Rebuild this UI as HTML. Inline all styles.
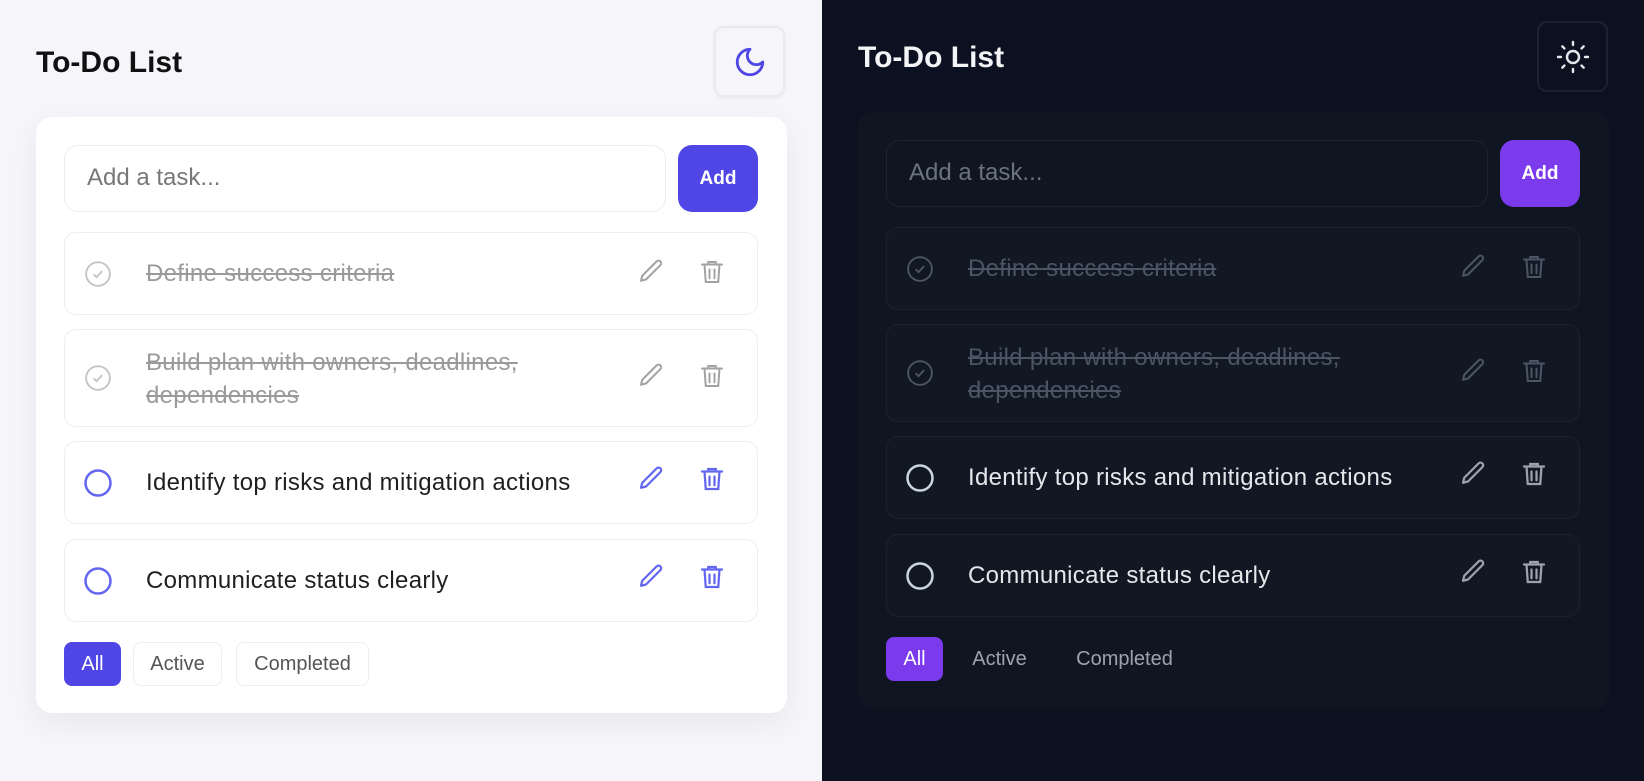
<!DOCTYPE html>
<html><head><meta charset="utf-8"><style>
*{box-sizing:border-box;margin:0;padding:0}
body{width:1644px;height:781px;overflow:hidden;font-family:"Liberation Sans",sans-serif;position:relative}
.panel{position:absolute;top:0;width:822px;height:781px}
.light{left:0;background:#f5f5fa}
.dark{left:822px;background:#0b1120}
.title{position:absolute;left:36px;font-size:30px;font-weight:bold}
.light .title{top:46px;color:#111}
.dark .title{top:41px;color:#f3f4f6}
.tog{position:absolute;width:71px;height:71px;border-radius:10px;display:flex;align-items:center;justify-content:center}
.light .tog{left:714px;top:26px;border:2px solid #e9e9f0;background:#f5f5fa;box-shadow:0 1px 3px rgba(0,0,0,.06)}
.dark .tog{left:715px;top:21px;border:2px solid #1a2230;background:#0b1120}
.card{position:absolute;left:36px;width:751px;border-radius:16px}
.light .card{top:117px;height:596px;background:#fff;box-shadow:0 10px 30px rgba(0,0,0,.06)}
.dark .card{top:112px;height:597px;background:#0f1621}
.inp{position:absolute;left:28px;top:28px;width:602px;height:67px;border-radius:14px;font-size:24px;padding-left:22px;line-height:64px}
.light .inp{border:1.5px solid #ececf2;color:#777}
.dark .inp{border:1.5px solid #1c2431;color:#6b7280;background:#0f1621}
.add{position:absolute;left:642px;top:28px;width:80px;height:67px;border-radius:14px;color:#fff;font-size:19px;font-weight:bold;display:flex;align-items:center;justify-content:center}
.light .add{background:#4f46e5}
.dark .add{background:#7c3aed}
.item{position:absolute;left:28px;width:694px;border-radius:12px}
.light .item{border:1.5px solid #ededf3;background:#fff}
.dark .item{border:1.5px solid #1a2230;background:#111824}
.item .txt{position:absolute;left:81px;font-size:24px;letter-spacing:0.3px;line-height:33px;width:470px}
.item svg{position:absolute}
.item .ck{left:18px}
.item .ed{left:571px}
.item .tr{left:632px}
.done .txt{text-decoration:line-through}
.light .done .txt{color:#9a9a9a}
.dark .done .txt{color:#4b5563}
.light .act .txt{color:#1f1f1f}
.dark .act .txt{color:#e5e7eb}
.filt{position:absolute;top:525px;height:44px;border-radius:8px;font-size:20px;display:flex;align-items:center;justify-content:center}
.light .filt{border:1.5px solid #ededf3;color:#555}
.dark .filt{color:#9ca3af}
.light .filt.on{background:#4f46e5;color:#fff;border-color:#4f46e5}
.dark .filt.on{background:#7c3aed;color:#fff}
</style></head><body>

<div class="panel light">
<div class="title">To-Do List</div>
<div class="tog"><svg width="34" height="34" viewBox="0 0 24 24" fill="none" stroke="#4f46e5" stroke-width="2" stroke-linecap="round" stroke-linejoin="round"><path d="M12 3a6 6 0 0 0 9 9 9 9 0 1 1-9-9Z"/></svg></div>
<div class="card">
<div class="inp">Add a task...</div>
<div class="add">Add</div>

<div class="item done" style="top:115px;height:83px">
<svg class="ck" style="top:26px" width="30" height="30" viewBox="0 0 24 24" fill="none" stroke="#c4c4c4" stroke-width="1.5"><circle cx="12" cy="12" r="9.5"/><path d="M8.5 12.2l2.3 2.3 4.5-4.8"/></svg>
<div class="txt" style="top:24px">Define success criteria</div>
<svg class="ed" style="top:24px" width="30" height="30" viewBox="0 0 24 24" fill="none" stroke="#a3a3a3" stroke-width="1.6" stroke-linejoin="round"><path d="M16.5 3.5a2.1 2.1 0 0 1 3 3L8 18l-4 1 1-4Z"/></svg>
<svg class="tr" style="top:24px" width="30" height="30" viewBox="0 0 24 24" fill="none" stroke="#a3a3a3" stroke-width="1.6" stroke-linecap="round"><path d="M4 6h16M9 6V4h6v2M6 6l1 14h10l1-14M10 10v7M14 10v7"/></svg>
</div>

<div class="item done" style="top:212px;height:98px">
<svg class="ck" style="top:33px" width="30" height="30" viewBox="0 0 24 24" fill="none" stroke="#c4c4c4" stroke-width="1.5"><circle cx="12" cy="12" r="9.5"/><path d="M8.5 12.2l2.3 2.3 4.5-4.8"/></svg>
<div class="txt" style="top:16px">Build plan with owners, deadlines, dependencies</div>
<svg class="ed" style="top:31px" width="30" height="30" viewBox="0 0 24 24" fill="none" stroke="#a3a3a3" stroke-width="1.6" stroke-linejoin="round"><path d="M16.5 3.5a2.1 2.1 0 0 1 3 3L8 18l-4 1 1-4Z"/></svg>
<svg class="tr" style="top:31px" width="30" height="30" viewBox="0 0 24 24" fill="none" stroke="#a3a3a3" stroke-width="1.6" stroke-linecap="round"><path d="M4 6h16M9 6V4h6v2M6 6l1 14h10l1-14M10 10v7M14 10v7"/></svg>
</div>

<div class="item act" style="top:324px;height:83px">
<svg class="ck" style="top:26px" width="30" height="30" viewBox="0 0 24 24" fill="none" stroke="#6366f1" stroke-width="2"><circle cx="12" cy="12" r="10"/></svg>
<div class="txt" style="top:24px">Identify top risks and mitigation actions</div>
<svg class="ed" style="top:22px" width="30" height="30" viewBox="0 0 24 24" fill="none" stroke="#6366f1" stroke-width="1.8" stroke-linejoin="round"><path d="M16.5 3.5a2.1 2.1 0 0 1 3 3L8 18l-4 1 1-4Z"/></svg>
<svg class="tr" style="top:22px" width="30" height="30" viewBox="0 0 24 24" fill="none" stroke="#6366f1" stroke-width="1.8" stroke-linecap="round"><path d="M4 6h16M9 6V4h6v2M6 6l1 14h10l1-14M10 10v7M14 10v7"/></svg>
</div>

<div class="item act" style="top:422px;height:83px">
<svg class="ck" style="top:26px" width="30" height="30" viewBox="0 0 24 24" fill="none" stroke="#6366f1" stroke-width="2"><circle cx="12" cy="12" r="10"/></svg>
<div class="txt" style="top:24px">Communicate status clearly</div>
<svg class="ed" style="top:22px" width="30" height="30" viewBox="0 0 24 24" fill="none" stroke="#6366f1" stroke-width="1.8" stroke-linejoin="round"><path d="M16.5 3.5a2.1 2.1 0 0 1 3 3L8 18l-4 1 1-4Z"/></svg>
<svg class="tr" style="top:22px" width="30" height="30" viewBox="0 0 24 24" fill="none" stroke="#6366f1" stroke-width="1.8" stroke-linecap="round"><path d="M4 6h16M9 6V4h6v2M6 6l1 14h10l1-14M10 10v7M14 10v7"/></svg>
</div>

<div class="filt on" style="left:28px;width:57px">All</div>
<div class="filt" style="left:97px;width:89px">Active</div>
<div class="filt" style="left:200px;width:133px">Completed</div>
</div>
</div>

<div class="panel dark">
<div class="title">To-Do List</div>
<div class="tog"><svg width="36" height="36" viewBox="0 0 24 24" fill="none" stroke="#e5e7eb" stroke-width="1.6" stroke-linecap="round"><circle cx="12" cy="12" r="4"/><path d="M12 2v2M12 20v2M4.9 4.9l1.4 1.4M17.7 17.7l1.4 1.4M2 12h2M20 12h2M4.9 19.1l1.4-1.4M17.7 6.3l1.4-1.4"/></svg></div>
<div class="card">
<div class="inp">Add a task...</div>
<div class="add">Add</div>

<div class="item done" style="top:115px;height:83px">
<svg class="ck" style="top:26px" width="30" height="30" viewBox="0 0 24 24" fill="none" stroke="#4b5563" stroke-width="1.5"><circle cx="12" cy="12" r="9.5"/><path d="M8.5 12.2l2.3 2.3 4.5-4.8"/></svg>
<div class="txt" style="top:24px">Define success criteria</div>
<svg class="ed" style="top:24px" width="30" height="30" viewBox="0 0 24 24" fill="none" stroke="#4b5563" stroke-width="1.6" stroke-linejoin="round"><path d="M16.5 3.5a2.1 2.1 0 0 1 3 3L8 18l-4 1 1-4Z"/></svg>
<svg class="tr" style="top:24px" width="30" height="30" viewBox="0 0 24 24" fill="none" stroke="#4b5563" stroke-width="1.6" stroke-linecap="round"><path d="M4 6h16M9 6V4h6v2M6 6l1 14h10l1-14M10 10v7M14 10v7"/></svg>
</div>

<div class="item done" style="top:212px;height:98px">
<svg class="ck" style="top:33px" width="30" height="30" viewBox="0 0 24 24" fill="none" stroke="#4b5563" stroke-width="1.5"><circle cx="12" cy="12" r="9.5"/><path d="M8.5 12.2l2.3 2.3 4.5-4.8"/></svg>
<div class="txt" style="top:16px">Build plan with owners, deadlines, dependencies</div>
<svg class="ed" style="top:31px" width="30" height="30" viewBox="0 0 24 24" fill="none" stroke="#4b5563" stroke-width="1.6" stroke-linejoin="round"><path d="M16.5 3.5a2.1 2.1 0 0 1 3 3L8 18l-4 1 1-4Z"/></svg>
<svg class="tr" style="top:31px" width="30" height="30" viewBox="0 0 24 24" fill="none" stroke="#4b5563" stroke-width="1.6" stroke-linecap="round"><path d="M4 6h16M9 6V4h6v2M6 6l1 14h10l1-14M10 10v7M14 10v7"/></svg>
</div>

<div class="item act" style="top:324px;height:83px">
<svg class="ck" style="top:26px" width="30" height="30" viewBox="0 0 24 24" fill="none" stroke="#cbd5e1" stroke-width="2"><circle cx="12" cy="12" r="10"/></svg>
<div class="txt" style="top:24px">Identify top risks and mitigation actions</div>
<svg class="ed" style="top:22px" width="30" height="30" viewBox="0 0 24 24" fill="none" stroke="#9ca3af" stroke-width="1.8" stroke-linejoin="round"><path d="M16.5 3.5a2.1 2.1 0 0 1 3 3L8 18l-4 1 1-4Z"/></svg>
<svg class="tr" style="top:22px" width="30" height="30" viewBox="0 0 24 24" fill="none" stroke="#9ca3af" stroke-width="1.8" stroke-linecap="round"><path d="M4 6h16M9 6V4h6v2M6 6l1 14h10l1-14M10 10v7M14 10v7"/></svg>
</div>

<div class="item act" style="top:422px;height:83px">
<svg class="ck" style="top:26px" width="30" height="30" viewBox="0 0 24 24" fill="none" stroke="#cbd5e1" stroke-width="2"><circle cx="12" cy="12" r="10"/></svg>
<div class="txt" style="top:24px">Communicate status clearly</div>
<svg class="ed" style="top:22px" width="30" height="30" viewBox="0 0 24 24" fill="none" stroke="#9ca3af" stroke-width="1.8" stroke-linejoin="round"><path d="M16.5 3.5a2.1 2.1 0 0 1 3 3L8 18l-4 1 1-4Z"/></svg>
<svg class="tr" style="top:22px" width="30" height="30" viewBox="0 0 24 24" fill="none" stroke="#9ca3af" stroke-width="1.8" stroke-linecap="round"><path d="M4 6h16M9 6V4h6v2M6 6l1 14h10l1-14M10 10v7M14 10v7"/></svg>
</div>

<div class="filt on" style="left:28px;width:57px">All</div>
<div class="filt" style="left:97px;width:89px">Active</div>
<div class="filt" style="left:200px;width:133px">Completed</div>
</div>
</div>

</body></html>
